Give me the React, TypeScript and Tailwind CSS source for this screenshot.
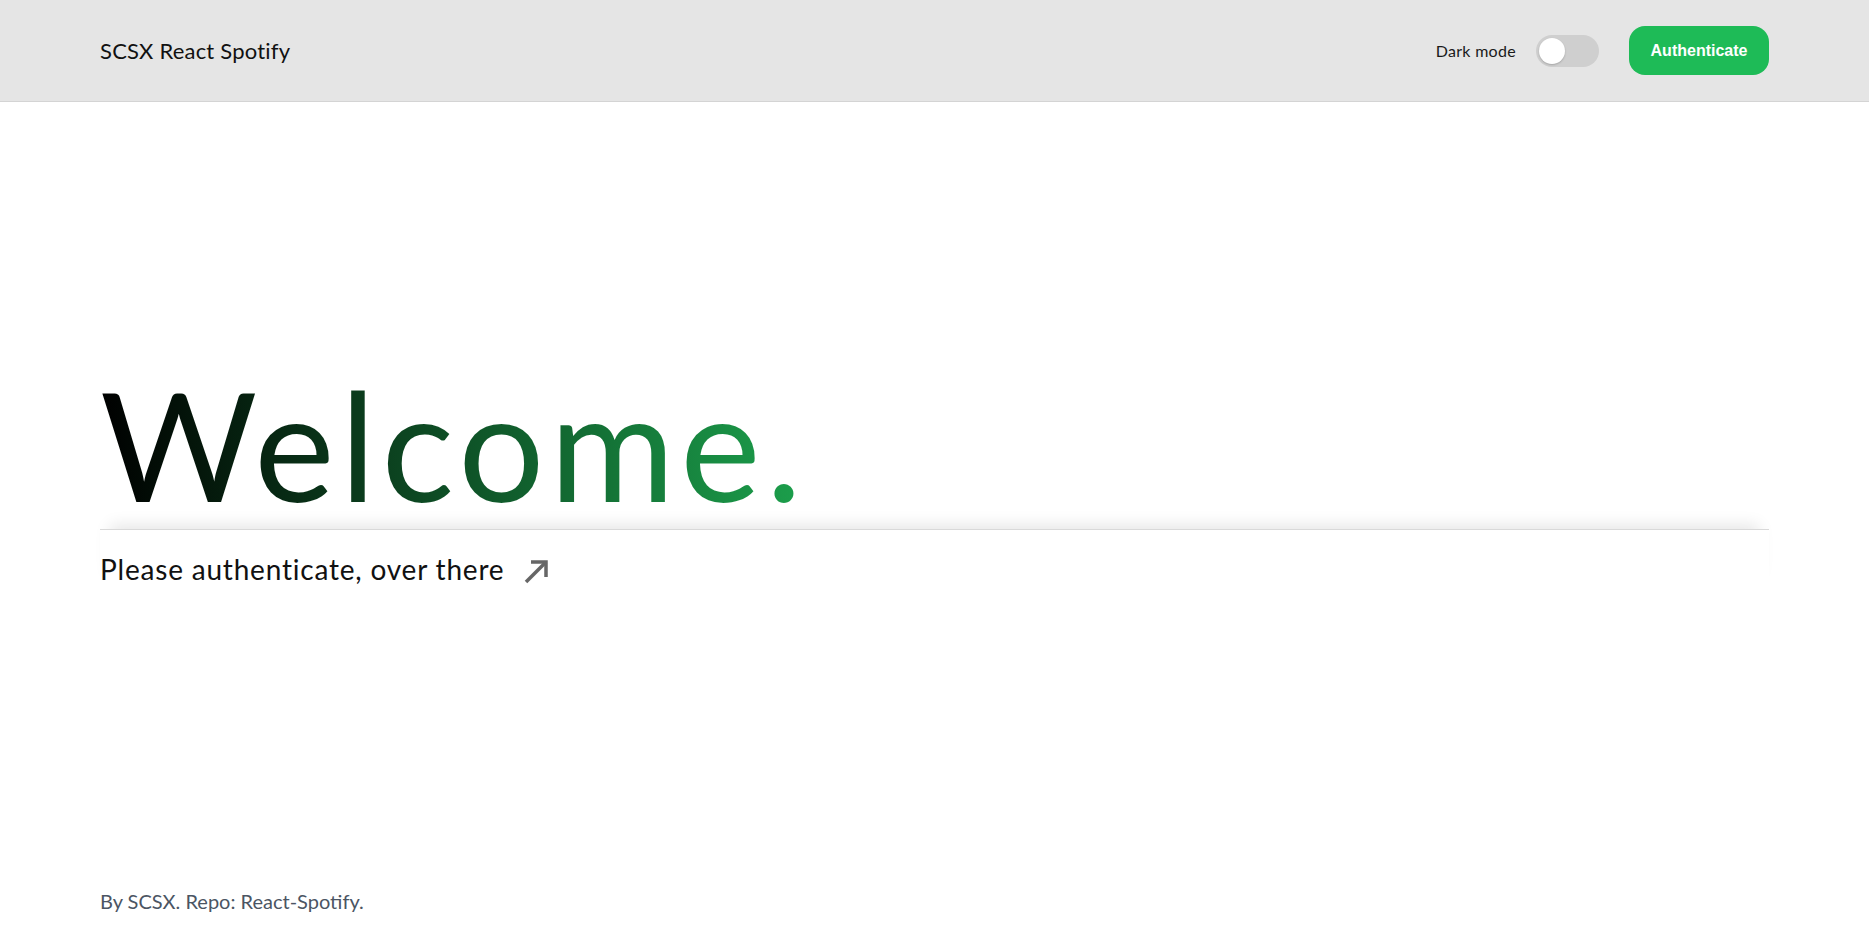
import React from "react";

const sans = { fontFamily: "Lato, 'Noto Sans', sans-serif" };

export default function App() {
  return (
    <div className="min-h-screen flex flex-col bg-white" style={sans}>
      <header className="h-[102px] bg-[#e5e5e5] border-b border-[#d4d4d4] px-[100px] flex items-center justify-between">
        <div className="text-[22px] text-[#111] tracking-[0.2px]">SCSX React Spotify</div>
        <div className="flex items-center">
          <span className="text-[16px] text-[#1a1a1a] tracking-[0.3px]">Dark mode</span>
          <div className="ml-[20px] w-[63px] h-[32px] rounded-full bg-[#cfcfcf] flex items-center px-[3px]">
            <div className="w-[26px] h-[26px] rounded-full bg-white shadow-[0_1px_2px_rgba(0,0,0,0.2)]" />
          </div>
          <button
            className="ml-[30px] w-[140px] h-[49px] rounded-[16px] bg-[#1ebb57] text-white text-[16px] font-bold"
            style={{ fontFamily: "'Liberation Sans', Arial, sans-serif" }}
          >
            Authenticate
          </button>
        </div>
      </header>

      <main className="flex-1 px-[100px] pt-[265px]">
        <h1 className="inline-block text-[152px] leading-none tracking-[5.5px] bg-clip-text text-transparent bg-[linear-gradient(to_right,#000000,#1ca04c)]">
          Welcome.
        </h1>
        <div className="mt-[10px] border-t border-[#d9d9d9] shadow-[0_-14px_16px_-10px_rgba(0,0,0,0.10)] pt-[18px] pb-[8px]">
          <div className="flex items-center text-[28px] text-[#111] tracking-[0.8px]">
            <span>Please authenticate, over there</span>
            <svg className="ml-[20px] mt-[4px]" width="26" height="26" viewBox="0 0 26 26" fill="none" stroke="#666" strokeWidth="3.5">
              <path d="M2 24 L22 4" />
              <path d="M7 4 H22 V19" />
            </svg>
          </div>
        </div>
      </main>

      <footer className="px-[100px] pb-[17px] text-[20px] text-[#4b5563]">
        By SCSX. Repo: React-Spotify.
      </footer>
    </div>
  );
}
